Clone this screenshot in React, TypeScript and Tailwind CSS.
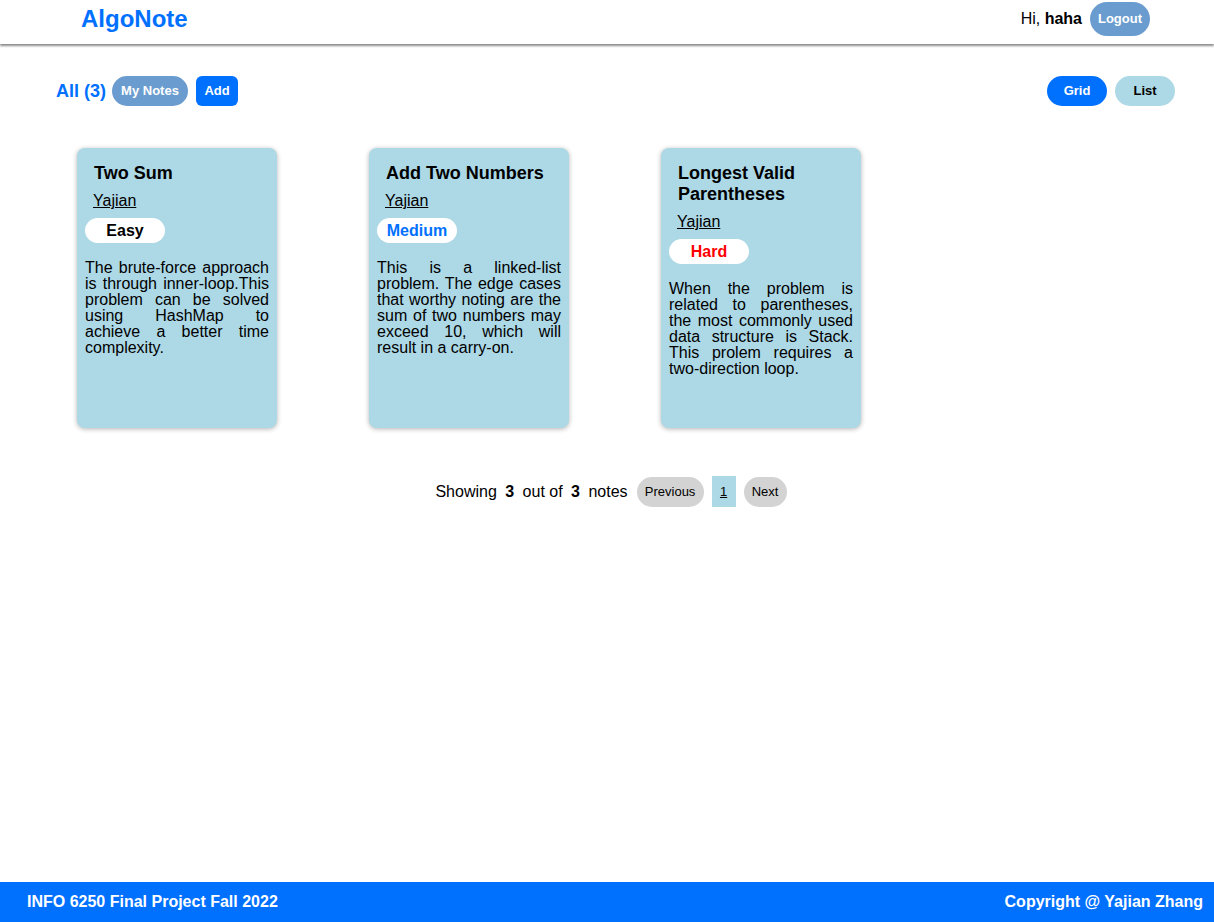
import React from "react";

const font = { fontFamily: '"Liberation Sans", Arial, sans-serif' };

type Note = { title: string; level: string; color: string; desc: string };

const notes: Note[] = [
  {
    title: "Two Sum",
    level: "Easy",
    color: "text-black",
    desc: "The brute-force approach is through inner-loop.This problem can be solved using HashMap to achieve a better time complexity.",
  },
  {
    title: "Add Two Numbers",
    level: "Medium",
    color: "text-[#0070ff]",
    desc: "This is a linked-list problem. The edge cases that worthy noting are the sum of two numbers may exceed 10, which will result in a carry-on.",
  },
  {
    title: "Longest Valid Parentheses",
    level: "Hard",
    color: "text-[#ff0000]",
    desc: "When the problem is related to parentheses, the most commonly used data structure is Stack. This prolem requires a two-direction loop.",
  },
];

function Card({ n }: { n: Note }) {
  return (
    <div className="w-[200px] h-[280px] bg-[#add8e6] rounded-lg shadow-[0_1px_5px_rgba(0,0,0,0.3)] px-2 pt-[15px] flex flex-col">
      <h3 className="ml-[9px] mr-2 text-[18px] leading-[21px] font-bold text-black">{n.title}</h3>
      <a className="ml-2 mt-2 text-[16px] leading-[18px] underline text-black self-start">Yajian</a>
      <div className={`mt-[8px] w-[80px] h-[25px] rounded-full bg-white flex items-center justify-center text-[16px] font-bold ${n.color}`}>
        {n.level}
      </div>
      <p className="mt-[17px] text-[16px] leading-[16px] text-black text-justify">{n.desc}</p>
    </div>
  );
}

export default function App() {
  return (
    <div style={font} className="min-h-screen flex flex-col bg-white text-black">
      <header className="h-[44px] pb-[6px] flex items-center justify-between pl-[81px] pr-[64px] shadow-[0_2px_2px_rgba(0,0,0,0.45)] relative z-10">
        <div className="text-[24px] font-bold text-[#0070ff]">AlgoNote</div>
        <div className="flex items-center gap-2">
          <span className="text-[16px]">
            Hi, <b>haha</b>
          </span>
          <button className="h-[34px] w-[60px] rounded-full bg-[#6a9ccf] text-white text-[13px] font-bold">Logout</button>
        </div>
      </header>

      <main className="flex-1">
        <div className="mt-[32px] flex items-center justify-between pl-[56px] pr-[39px]">
          <div className="flex items-center">
            <span className="text-[18px] font-bold text-[#0070ff]">All (3)</span>
            <button className="ml-[6px] h-[30px] w-[76px] rounded-full bg-[#6a9ccf] text-white text-[13px] font-bold">My Notes</button>
            <button className="ml-2 h-[30px] w-[42px] rounded-md bg-[#0070ff] text-white text-[13px] font-bold">Add</button>
          </div>
          <div className="flex items-center gap-2">
            <button className="h-[30px] w-[60px] rounded-full bg-[#0070ff] text-white text-[13px] font-bold">Grid</button>
            <button className="h-[30px] w-[60px] rounded-full bg-[#add8e6] text-black text-[13px] font-bold">List</button>
          </div>
        </div>

        <div className="mt-[42px] pl-[77px] flex gap-[92px]">
          {notes.map((n) => (
            <Card key={n.title} n={n} />
          ))}
        </div>

        <div className="mt-[48px] flex items-center justify-center gap-2 pl-[8px]">
          <span className="text-[16px]">
            Showing <b className="mx-[4px]">3</b> out of <b className="mx-[4px]">3</b> notes
          </span>
          <button className="ml-px h-[30px] w-[67px] rounded-full bg-[#d3d3d3] text-[13px] text-black">Previous</button>
          <button className="h-[31px] w-[24px] bg-[#add8e6] text-[13px] text-black underline">1</button>
          <button className="h-[30px] w-[43px] rounded-full bg-[#d3d3d3] text-[13px] text-black">Next</button>
        </div>
      </main>

      <footer className="h-[40px] bg-[#0070ff] flex items-center justify-between pl-[27px] pr-[11px] text-white text-[16px] font-bold">
        <span>INFO 6250 Final Project Fall 2022</span>
        <span>Copyright @ Yajian Zhang</span>
      </footer>
    </div>
  );
}
